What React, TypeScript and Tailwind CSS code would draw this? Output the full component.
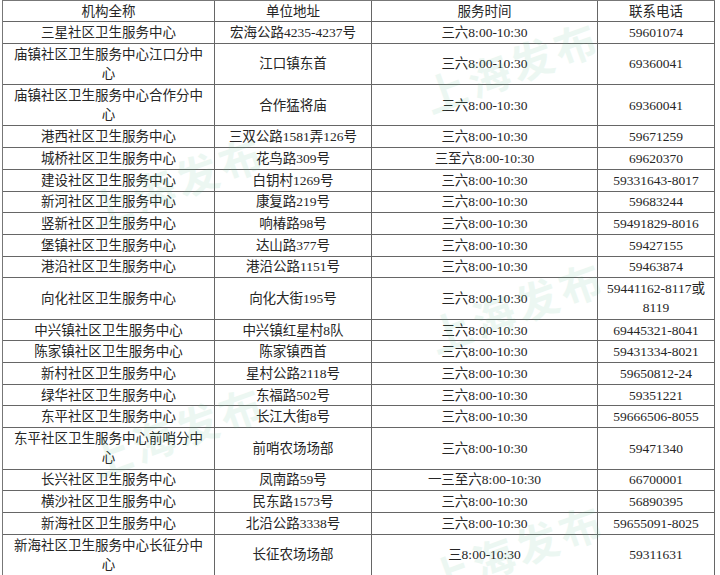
import React from "react";

type Row = {
    name: string[];
    addr: string;
    time: string;
    phone: string[];
    tall?: boolean;
};

const rows: Row[] = [
    { name: ["三星社区卫生服务中心"], addr: "宏海公路4235-4237号", time: "三六8:00-10:30", phone: ["59601074"] },
    { name: ["庙镇社区卫生服务中心江口分中", "心"], addr: "江口镇东首", time: "三六8:00-10:30", phone: ["69360041"], tall: true },
    { name: ["庙镇社区卫生服务中心合作分中", "心"], addr: "合作猛将庙", time: "三六8:00-10:30", phone: ["69360041"], tall: true },
    { name: ["港西社区卫生服务中心"], addr: "三双公路1581弄126号", time: "三六8:00-10:30", phone: ["59671259"] },
    { name: ["城桥社区卫生服务中心"], addr: "花鸟路309号", time: "三至六8:00-10:30", phone: ["69620370"] },
    { name: ["建设社区卫生服务中心"], addr: "白钥村1269号", time: "三六8:00-10:30", phone: ["59331643-8017"] },
    { name: ["新河社区卫生服务中心"], addr: "康复路219号", time: "三六8:00-10:30", phone: ["59683244"] },
    { name: ["竖新社区卫生服务中心"], addr: "响椿路98号", time: "三六8:00-10:30", phone: ["59491829-8016"] },
    { name: ["堡镇社区卫生服务中心"], addr: "达山路377号", time: "三六8:00-10:30", phone: ["59427155"] },
    { name: ["港沿社区卫生服务中心"], addr: "港沿公路1151号", time: "三六8:00-10:30", phone: ["59463874"] },
    { name: ["向化社区卫生服务中心"], addr: "向化大街195号", time: "三六8:00-10:30", phone: ["59441162-8117或", "8119"], tall: true },
    { name: ["中兴镇社区卫生服务中心"], addr: "中兴镇红星村8队", time: "三六8:00-10:30", phone: ["69445321-8041"] },
    { name: ["陈家镇社区卫生服务中心"], addr: "陈家镇西首", time: "三六8:00-10:30", phone: ["59431334-8021"] },
    { name: ["新村社区卫生服务中心"], addr: "星村公路2118号", time: "三六8:00-10:30", phone: ["59650812-24"] },
    { name: ["绿华社区卫生服务中心"], addr: "东福路502号", time: "三六8:00-10:30", phone: ["59351221"] },
    { name: ["东平社区卫生服务中心"], addr: "长江大街8号", time: "三六8:00-10:30", phone: ["59666506-8055"] },
    { name: ["东平社区卫生服务中心前哨分中", "心"], addr: "前哨农场场部", time: "三六8:00-10:30", phone: ["59471340"], tall: true },
    { name: ["长兴社区卫生服务中心"], addr: "凤南路59号", time: "一三至六8:00-10:30", phone: ["66700001"] },
    { name: ["横沙社区卫生服务中心"], addr: "民东路1573号", time: "三六8:00-10:30", phone: ["56890395"] },
    { name: ["新海社区卫生服务中心"], addr: "北沿公路3338号", time: "三六8:00-10:30", phone: ["59655091-8025"] },
    { name: ["新海社区卫生服务中心长征分中", "心"], addr: "长征农场场部", time: "三8:00-10:30", phone: ["59311631"], tall: true },
];

const font = { fontFamily: '"Liberation Serif", "Noto Sans CJK SC", serif' };

const Cell: React.FC<{ lines: string[]; w: string }> = ({ lines, w }) => (
    <div className={`${w} flex flex-col items-center justify-center border-r border-[#666] text-center leading-[19px]`}>
        {lines.map((l, i) => (
            <span key={i} className="whitespace-nowrap">{l}</span>
        ))}
    </div>
);

const cols = ["w-[212px]", "w-[157px]", "w-[226px]", "w-[117px]"];

// faint "上海发布" watermark, repeated diagonally
const marks = [
    { x: 425, y: 65 },
    { x: 90, y: 180 },
    { x: 430, y: 305 },
    { x: 90, y: 430 },
    { x: 430, y: 548 },
];

export default function App() {
    return (
        <div className="relative w-[720px] h-[575px] overflow-hidden bg-white pl-[2px] text-[13.5px] text-[#262626]" style={font}>
            <div className="flex w-[713px] flex-col border-l border-t border-[#777]">
                <div className="flex h-[21px] border-b border-[#666]">
                    <Cell w={cols[0]} lines={["机构全称"]} />
                    <Cell w={cols[1]} lines={["单位地址"]} />
                    <Cell w={cols[2]} lines={["服务时间"]} />
                    <Cell w={cols[3]} lines={["联系电话"]} />
                </div>
                {rows.map((r, i) => (
                    <div key={i} className={`flex border-b border-[#666] ${r.tall ? "h-[41.4px]" : "h-[21.7px]"}`}>
                        <Cell w={cols[0]} lines={r.name} />
                        <Cell w={cols[1]} lines={[r.addr]} />
                        <Cell w={cols[2]} lines={[r.time]} />
                        <Cell w={cols[3]} lines={r.phone} />
                    </div>
                ))}
            </div>

            {marks.map((m, i) => (
                <span
                    key={i}
                    className="pointer-events-none absolute origin-left -rotate-[20deg] whitespace-nowrap text-[42px] font-bold tracking-[4px] text-[#5cbf8f] opacity-[0.11]"
                    style={{ left: m.x, top: m.y, fontFamily: '"Noto Sans CJK SC", sans-serif' }}
                >
                    上海发布
                </span>
            ))}
        </div>
    );
}
